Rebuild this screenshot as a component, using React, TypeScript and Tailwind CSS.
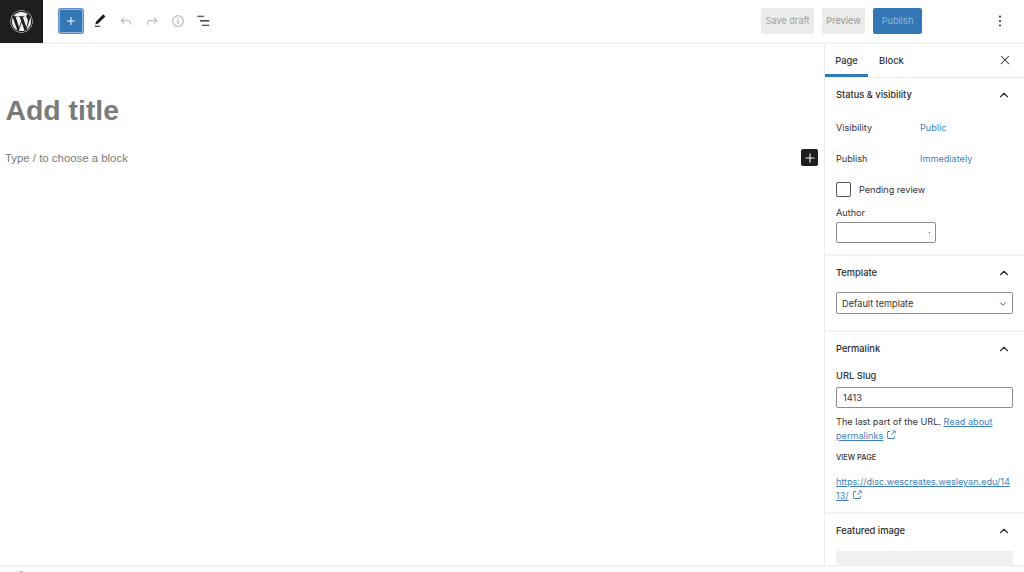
import { Plus, ChevronUp, ChevronDown } from 'lucide-react';
import { FaWordpress } from 'react-icons/fa';

const externalPath =
  'M18.2 17c0 .7-.6 1.2-1.2 1.2H7c-.7 0-1.2-.6-1.2-1.2V7c0-.7.6-1.2 1.2-1.2h3.2V4.2H7C5.5 4.2 4.2 5.5 4.2 7v10c0 1.5 1.2 2.8 2.8 2.8h10c1.5 0 2.8-1.2 2.8-2.8v-3.6h-1.5V17zM14.9 3v1.5h3.7l-6.4 6.4 1.1 1.1 6.4-6.4v3.7h1.5V3h-6.3z';

function Icon({ d, className }: { d: string; className: string }) {
  return (
    <svg viewBox="0 0 24 24" className={className} fill="currentColor">
      <path d={d} />
    </svg>
  );
}

function PanelHeader({ title }: { title: string }) {
  return (
    <div className="flex items-center justify-between pl-[11px] pr-[13px] pt-[10px]">
      <span className="text-[9.3px] leading-[14px] font-medium text-[#2b2b2b]">{title}</span>
      <ChevronUp className="w-[14px] h-[14px] text-[#2b2b2b]" strokeWidth={2} />
    </div>
  );
}

function App() {
  return (
    <div className="w-[1024px] h-[572px] overflow-hidden bg-white flex flex-col font-['Inter',sans-serif] text-[#333333]">
      <header className="h-[44px] shrink-0 flex border-b-2 border-[#f2f2f2]">
        <div className="w-[43px] h-[43px] bg-[#1e1e1e] flex items-center justify-center shrink-0">
          <FaWordpress className="w-[23px] h-[23px] text-[#f0f0f0]" />
        </div>
        <div className="flex items-center pl-[16px] h-[42px] flex-1">
          <button className="w-[24px] h-[24px] bg-[#3477b5] rounded-[2px] ring-1 ring-[#5a90c4] border border-[#8fb6da] flex items-center justify-center">
            <Plus className="w-[12px] h-[12px] text-white" strokeWidth={2} />
          </button>
          <Icon className="w-[16px] h-[16px] ml-[9px] text-[#1e1e1e]" d="M20.1 5.1L16.9 2 6.2 12.7l-1.3 4.4 4.5-1.3L20.1 5.1zM4 20.8h8v-1.5H4v1.5z" />
          <Icon className="w-[16px] h-[16px] ml-[10px] text-[#b4b4b4]" d="M18.3 11.7c-.6-.6-1.4-.9-2.3-.9H6.7l2.9-3.3-1.1-1-4.5 5L8.5 16l1-1-2.7-2.7H16c.5 0 .9.2 1.3.5 1 1 1 3.4 1 4.5v.3h1.5v-.2c0-1.5 0-4.3-1.5-5.7z" />
          <Icon className="w-[16px] h-[16px] ml-[10px] text-[#b4b4b4]" d="M15.6 6.5l-1.1 1 2.9 3.3H8c-.9 0-1.7.3-2.3.9-1.4 1.5-1.4 4.2-1.4 5.6v.2h1.5v-.3c0-1.1 0-3.5 1-4.5.3-.3.7-.5 1.3-.5h9.2L14.5 15l1.1 1.1 4.6-4.6-4.6-5z" />
          <Icon className="w-[16px] h-[16px] ml-[10px] text-[#b4b4b4]" d="M12 3.2c-4.8 0-8.8 3.9-8.8 8.8 0 4.8 3.9 8.8 8.8 8.8 4.8 0 8.8-3.9 8.8-8.8 0-4.8-4-8.8-8.8-8.8zm0 16c-4 0-7.2-3.3-7.2-7.2C4.8 8 8 4.8 12 4.8s7.2 3.3 7.2 7.2c0 4-3.2 7.2-7.2 7.2zM11 17h2v-6h-2v6zm0-8h2V7h-2v2z" />
          <Icon className="w-[16px] h-[16px] ml-[10px] text-[#1e1e1e]" d="M2 4h10v1.6H2zM6 11h14v1.6H6zM9 17.6h11v1.6H9z" />
          <div className="ml-auto flex items-center">
            <button className="w-[53px] h-[26px] bg-[#ebebeb] rounded-[2px] text-[9.2px] text-[#a0a0a0]">Save draft</button>
            <button className="w-[43px] h-[26px] ml-[8px] bg-[#ebebeb] rounded-[2px] text-[9.2px] text-[#969696]">Preview</button>
            <button className="w-[49px] h-[26px] ml-[8px] bg-[#3477b5] rounded-[2px] text-[9.2px] text-[#8fb6da]">Publish</button>
            <svg viewBox="0 0 16 16" className="w-[16px] h-[16px] ml-[70px] mr-[16px] text-[#1e1e1e]" fill="currentColor">
              <circle cx="8" cy="3.5" r="1" />
              <circle cx="8" cy="8" r="1" />
              <circle cx="8" cy="12.5" r="1" />
            </svg>
          </div>
        </div>
      </header>

      <div className="flex-1 min-h-0 flex">
        <main className="flex-1 min-w-0">
          <h1 className="pl-[5.5px] mt-[48px] text-[28.4px] leading-[36px] font-bold font-['Liberation_Sans',sans-serif] text-[#7a7a7a]">
            Add title
          </h1>
          <div className="flex items-center justify-between mt-[20px] pl-[5px] pr-[6px]">
            <p className="text-[11.4px] leading-[18px] pt-[1px] font-['Liberation_Sans',sans-serif] text-[#7a7a7a]">Type / to choose a block</p>
            <button className="w-[17px] h-[17px] bg-[#1e1e1e] rounded-[2px] flex items-center justify-center">
              <Plus className="w-[14px] h-[14px] text-[#e8e8e8]" strokeWidth={2} />
            </button>
          </div>
        </main>

        <aside className="w-[200px] shrink-0 border-l border-[#ececec] overflow-hidden">
          <div className="h-[34px] flex items-stretch border-b border-[#ececec]">
            <div className="w-[43px] flex items-center justify-center text-[9.4px] font-medium border-b-[3px] border-[#3477b5] pt-[4px]">Page</div>
            <div className="ml-[11px] flex items-center text-[9.4px] font-medium pt-[1px]">Block</div>
            <svg viewBox="0 0 24 24" className="ml-auto mr-[12px] mt-[9px] w-[14px] h-[14px] text-[#2b2b2b]" fill="currentColor">
              <path d="M13 11.8l6.1-6.3-1-1-6.1 6.2-6.1-6.2-1 1 6.1 6.3-6.5 6.7 1 1 6.5-6.6 6.5 6.6 1-1z" />
            </svg>
          </div>

          <section className="h-[178px] border-b-2 border-[#f2f2f2]">
            <PanelHeader title="Status & visibility" />
            <div className="pl-[11px] mt-[19px] flex text-[9.15px] leading-[14px]">
              <span className="w-[84px]">Visibility</span>
              <span className="text-[#3f7fbb]">Public</span>
            </div>
            <div className="pl-[11px] mt-[17px] flex text-[9.15px] leading-[14px]">
              <span className="w-[84px]">Publish</span>
              <span className="text-[#3f7fbb]">Immediately</span>
            </div>
            <div className="pl-[11px] mt-[16px] flex items-center">
              <span className="w-[15px] h-[15px] border border-[#555555] rounded-[2px]" />
              <span className="ml-[8px] text-[9.15px] leading-[14px]">Pending review</span>
            </div>
            <div className="pl-[11px] mt-[9px] text-[9.15px] leading-[14px]">Author</div>
            <div className="ml-[11px] mt-[2px] w-[100px] h-[21px] border border-[#8c8c8c] rounded-[2px] flex items-center justify-end pr-[5px]">
              <span className="w-[1px] h-[1px] bg-[#555]" />
            </div>
          </section>

          <section className="h-[76px] border-b-2 border-[#f2f2f2]">
            <PanelHeader title="Template" />
            <div className="ml-[11px] mt-[12px] w-[177px] h-[22px] border border-[#8c8c8c] rounded-[2px] flex items-center justify-between pl-[5px] pr-[4px] pt-[1px] text-[9.2px]">
              Default template
              <ChevronDown className="w-[10px] h-[10px]" strokeWidth={2} />
            </div>
          </section>

          <section className="h-[182px] border-b-2 border-[#f2f2f2]">
            <PanelHeader title="Permalink" />
            <div className="pl-[11px] mt-[13px] text-[9.3px] leading-[14px] font-medium">URL Slug</div>
            <div className="ml-[11px] mt-[4px] w-[177px] h-[21px] border border-[#8c8c8c] rounded-[2px] flex items-center pl-[6px] text-[9.2px]">1413</div>
            <p className="ml-[11px] mt-[7px] w-[177px] text-[9.15px] leading-[14px]">
              The last part of the URL. <a className="text-[#3f7fbb] underline">Read about permalinks</a>
              <Icon className="inline w-[12px] h-[12px] ml-[2px] text-[#3f7fbb] align-[-2px]" d={externalPath} />
            </p>
            <div className="pl-[11px] mt-[9px] text-[7.4px] leading-[12px] font-medium">VIEW PAGE</div>
            <p className="ml-[11px] mt-[11px] w-[177px] text-[9.05px] leading-[14px] break-all">
              <a className="text-[#3f7fbb] underline">https://disc.wescreates.wesleyan.edu/1413/</a>
              <Icon className="inline w-[12px] h-[12px] ml-[2px] text-[#3f7fbb] align-[-2px]" d={externalPath} />
            </p>
          </section>

          <section>
            <PanelHeader title="Featured image" />
            <div className="ml-[11px] mt-[13px] w-[177px] h-[20px] bg-[#f0f0f0]" />
          </section>
        </aside>
      </div>

      <footer className="h-[7px] shrink-0 border-t-2 border-[#f2f2f2] bg-white">
        <div className="ml-[19px] mt-[4px] w-[4px] h-[1px] bg-[#bbbbbb]" />
      </footer>
    </div>
  );
}

export default App;
